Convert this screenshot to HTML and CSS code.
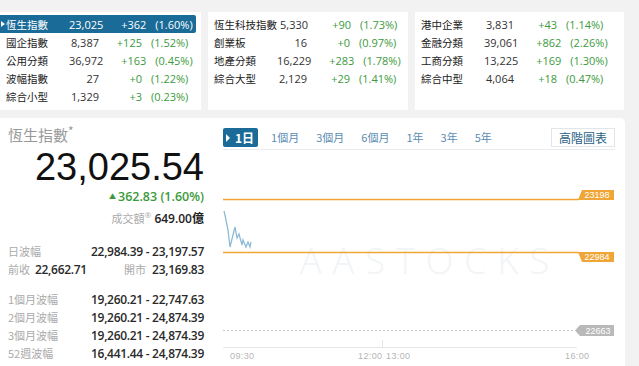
FILE: index.html
```html
<!DOCTYPE html>
<html lang="zh-Hant">
<head>
    <meta charset="UTF-8">
    <title>恆生指數</title>
    <link rel="stylesheet" href="styles.css">
</head>
<body>
    <div class="board">
        <div class="panel">
            <div class="row active"><span class="name">恆生指數</span><span class="val">23,025</span><span class="chg">+362</span><span class="pct">(1.60%)</span></div>
            <div class="row"><span class="name">國企指數</span><span class="val">8,387</span><span class="chg">+125</span><span class="pct">(1.52%)</span></div>
            <div class="row"><span class="name">公用分類</span><span class="val">36,972</span><span class="chg">+163</span><span class="pct">(0.45%)</span></div>
            <div class="row"><span class="name">波幅指數</span><span class="val">27</span><span class="chg">+0</span><span class="pct">(1.22%)</span></div>
            <div class="row"><span class="name">綜合小型</span><span class="val">1,329</span><span class="chg">+3</span><span class="pct">(0.23%)</span></div>
        </div>
        <div class="panel">
            <div class="row"><span class="name">恆生科技指數</span><span class="val">5,330</span><span class="chg">+90</span><span class="pct">(1.73%)</span></div>
            <div class="row"><span class="name">創業板</span><span class="val">16</span><span class="chg">+0</span><span class="pct">(0.97%)</span></div>
            <div class="row"><span class="name">地產分類</span><span class="val">16,229</span><span class="chg">+283</span><span class="pct">(1.78%)</span></div>
            <div class="row"><span class="name">綜合大型</span><span class="val">2,129</span><span class="chg">+29</span><span class="pct">(1.41%)</span></div>
        </div>
        <div class="panel">
            <div class="row"><span class="name">港中企業</span><span class="val">3,831</span><span class="chg">+43</span><span class="pct">(1.14%)</span></div>
            <div class="row"><span class="name">金融分類</span><span class="val">39,061</span><span class="chg">+862</span><span class="pct">(2.26%)</span></div>
            <div class="row"><span class="name">工商分類</span><span class="val">13,225</span><span class="chg">+169</span><span class="pct">(1.30%)</span></div>
            <div class="row"><span class="name">綜合中型</span><span class="val">4,064</span><span class="chg">+18</span><span class="pct">(0.47%)</span></div>
        </div>
    </div>

    <div class="card">
        <div class="quote">
            <div class="title">恆生指數<sup>*</sup></div>
            <div class="last">23,025.54</div>
            <div class="change"><span class="up">▲</span>362.83 (1.60%)</div>
            <div class="turnover"><span class="lbl">成交額</span><sup class="reg">®</sup> <b>649.00億</b></div>

            <div class="stat first"><span class="lbl">日波幅</span><span class="num">22,984.39 - 23,197.57</span></div>
            <div class="stat"><span class="lbl">前收</span><span class="num prev">22,662.71</span><span class="lbl open">開市</span><span class="num">23,169.83</span></div>

            <div class="stat gap"><span class="lbl">1個月波幅</span><span class="num">19,260.21 - 22,747.63</span></div>
            <div class="stat"><span class="lbl">2個月波幅</span><span class="num">19,260.21 - 24,874.39</span></div>
            <div class="stat"><span class="lbl">3個月波幅</span><span class="num">19,260.21 - 24,874.39</span></div>
            <div class="stat"><span class="lbl">52週波幅</span><span class="num">16,441.44 - 24,874.39</span></div>
        </div>

        <div class="chart">
            <div class="tabs">
                <span class="tab on">1日</span>
                <span class="tab">1個月</span>
                <span class="tab">3個月</span>
                <span class="tab">6個月</span>
                <span class="tab">1年</span>
                <span class="tab">3年</span>
                <span class="tab">5年</span>
                <span class="adv">高階圖表</span>
            </div>
            <svg class="plot" width="392" height="214" viewBox="0 0 392 214">
                <text x="207" y="124" class="mark">AASTOCKS</text>
                <!-- high / low -->
                <line x1="0" y1="49.5" x2="356" y2="49.5" class="hl"/>
                <polygon points="355,50 359,40 391,40 391,50" class="tag-o"/>
                <text x="374" y="48" class="tag-t">23198</text>
                <line x1="0" y1="102.5" x2="356" y2="102.5" class="hl"/>
                <polygon points="355,102 391,102 391,112 359,112" class="tag-o"/>
                <text x="374" y="110" class="tag-t">22984</text>
                <!-- prev close -->
                <line x1="0" y1="180.5" x2="352" y2="180.5" class="pc"/>
                <polygon points="352,180.5 357,175 391,175 391,186 357,186" class="tag-g"/>
                <text x="375" y="184" class="tag-t">22663</text>
                <!-- intraday -->
                <polyline points="1,61 2,65 5,80 7,97 12,77 14,88 16,84 19,95 20,90 23,97 25,92 27,97 28,92" class="spark"/>
                <!-- axis -->
                <line x1="0" y1="197.5" x2="354" y2="197.5" class="axis"/>
                <line x1="159.5" y1="190" x2="159.5" y2="197" class="axis"/>
                <text x="7" y="209" class="time">09:30</text>
                <text x="135" y="209" class="time">12:00</text>
                <text x="163" y="209" class="time">13:00</text>
                <text x="342" y="209" class="time">16:00</text>
            </svg>
        </div>
    </div>
</body>
</html>
```

FILE: styles.css
```css
body {
    margin: 0;
    background: #f2f2f2;
    font-family: "Open Sans", "Noto Sans CJK TC", sans-serif;
    color: #333;
    width: 639px;
    height: 366px;
    overflow: hidden;
}
.board {
    display: grid;
    grid-template-columns: 201px 200px 209px;
    column-gap: 7px;
    padding-top: 12px;
    height: 98px;
}
.panel {
    background: #fff;
    padding-top: 3px;
}
.row {
    display: flex;
    align-items: center;
    height: 18px;
    width: 196px;
    font-size: 11px;
    white-space: nowrap;
}
.row .name {
    flex: 0 0 auto;
    min-width: 60px;
    padding: 0 3px 0 6px;
    font-family: "Noto Sans CJK TC", sans-serif;
    font-size: 10.5px;
    color: #222;
}
.row .val {
    flex: 1 1 auto;
    text-align: right;
    color: #333;
}
.row .chg {
    flex: 0 0 43px;
    text-align: right;
    color: #3c9a3c;
}
.row .pct {
    flex: 0 0 45px;
    padding-left: 9px;
    color: #3c9a3c;
}
.row.active {
    background: #1b6b98;
    border-radius: 0 2px 2px 0;
    position: relative;
}
.row.active::before {
    content: "";
    position: absolute;
    left: 1px;
    top: 6px;
    border-left: 4px solid #fff;
    border-top: 3px solid transparent;
    border-bottom: 3px solid transparent;
}
.row.active span {
    color: #fff;
}
.card {
    display: flex;
    background: #fff;
    width: 625px;
    height: 248px;
    margin-top: 8px;
    border-radius: 0 5px 0 0;
}
.quote {
    width: 196px;
    padding: 7px 0 0 8px;
}
.title {
    font-family: "Noto Sans CJK TC", sans-serif;
    font-size: 15px;
    line-height: 20px;
    height: 20px;
    color: #999;
}
.title sup {
    font-size: 12px;
    vertical-align: 5px;
    line-height: 0;
}
.last {
    font-family: "Liberation Sans", sans-serif;
    font-size: 38px;
    line-height: 44px;
    text-align: right;
    color: #111;
}
.change {
    text-align: right;
    font-size: 12.5px;
    line-height: 16px;
    color: #3c9a3c;
    font-weight: 600;
}
.change .up {
    font-size: 7px;
    vertical-align: 2px;
    margin-right: 2px;
}
.turnover {
    text-align: right;
    font-size: 12px;
    line-height: 16px;
    margin-top: 5px;
    color: #222;
}
.turnover .lbl {
    font-family: "Noto Sans CJK TC", sans-serif;
    color: #aaa;
    font-size: 11px;
}
.turnover .reg {
    font-size: 8px;
    color: #aaa;
    line-height: 0;
}
.turnover b {
    font-weight: 600;
}
.stat {
    display: flex;
    align-items: center;
    height: 18px;
    font-size: 12px;
    white-space: nowrap;
}
.stat.first {
    margin-top: 15px;
}
.stat.gap {
    margin-top: 12px;
}
.stat .lbl {
    font-family: "Noto Sans CJK TC", "Open Sans", sans-serif;
    font-size: 11px;
    color: #aaa;
}
.stat .num {
    margin-left: auto;
    color: #2a2a2a;
    font-weight: 600;
    letter-spacing: -0.3px;
}
.stat .num.prev {
    margin-left: 5px;
}
.stat .lbl.open {
    margin-left: auto;
}
.stat .lbl.open + .num {
    margin-left: 6px;
}
.chart {
    width: 392px;
    margin-left: 19px;
    padding-top: 9px;
}
.tabs {
    display: flex;
    align-items: center;
    height: 20px;
    padding-bottom: 2px;
    border-bottom: 1px solid #e8ecef;
}
.tab {
    font-family: "Noto Sans CJK TC", sans-serif;
    font-size: 11px;
    color: #5b8db3;
    margin-right: 17px;
}
.tab.on {
    background: #1b6b98;
    color: #fff;
    font-weight: bold;
    font-size: 12px;
    padding: 1px 4px 1px 12px;
    border-radius: 2px;
    margin-right: 13px;
    position: relative;
}
.tab.on::before {
    content: "";
    position: absolute;
    left: 3px;
    top: 6px;
    border-left: 4px solid #fff;
    border-top: 4px solid transparent;
    border-bottom: 4px solid transparent;
}
.adv {
    margin-left: auto;
    font-family: "Noto Sans CJK TC", sans-serif;
    font-size: 12px;
    color: #2a5f86;
    border: 1px solid #e2e6ea;
    padding: 0 7px;
    line-height: 17px;
}
.plot {
    display: block;
}
.mark {
    font-family: "Open Sans", sans-serif;
    font-size: 36px;
    letter-spacing: 11px;
    fill: #f1f4f7;
    text-anchor: middle;
    font-weight: 300;
}
.hl {
    stroke: #f0a637;
    stroke-width: 1.5;
}
.tag-o {
    fill: #f0a637;
}
.tag-g {
    fill: #b9b9b9;
}
.tag-t {
    font-family: "Liberation Sans", sans-serif;
    font-size: 9px;
    fill: #fff;
    text-anchor: middle;
}
.pc {
    stroke: #c8c8c8;
    stroke-width: 1;
    stroke-dasharray: 2 2;
}
.spark {
    fill: none;
    stroke: #8fbbd2;
    stroke-width: 1.3;
}
.axis {
    stroke: #e6e6e6;
    stroke-width: 1;
}
.time {
    font-family: "Liberation Sans", sans-serif;
    font-size: 9px;
    letter-spacing: 0.4px;
    fill: #b5b5b5;
}
```
